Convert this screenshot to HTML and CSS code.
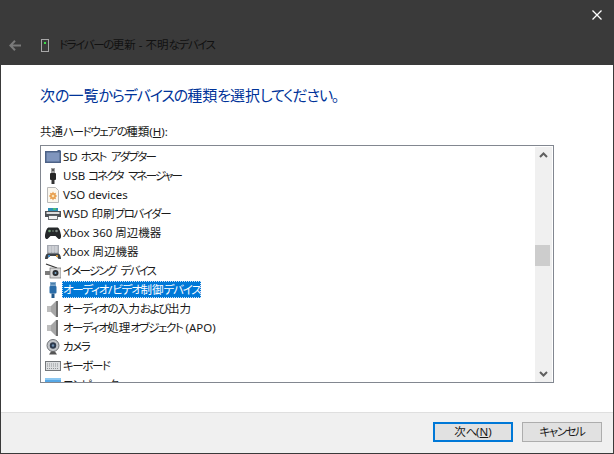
FILE: index.html
```html
<!DOCTYPE html>
<html lang="ja">
<head>
<meta charset="utf-8">
<title>ドライバーの更新</title>
<link rel="stylesheet" href="styles.css">
</head>
<body>
<div class="window">
  <header class="chrome">
    <div class="close-row">
      <svg class="close" width="10" height="10" viewBox="0 0 10 10"><path d="M0.500 0.500L9.500 9.500M9.500 0.500L0.500 9.500" stroke="#fff" stroke-width="1.300" fill="none"/></svg>
    </div>
    <div class="title-row">
      <svg class="back" width="12" height="11" viewBox="0 0 12 11"><path d="M6 .7L1.400 5.500L6 10.300M1.400 5.500H12" stroke="#7a7a7a" stroke-width="2" fill="none"/></svg>
      <svg class="device" width="8" height="13" viewBox="0 0 8 13"><rect x=".5" y=".5" width="7" height="12" fill="#3a3a3a" stroke="#a8a8a8"/><rect x="3" y="3" width="2" height="2" fill="#3ce04a"/></svg>
      <span class="title"><span class="k">ドライバーの</span>更新 - 不明<span class="k">なデバイス</span></span>
    </div>
  </header>
  <main class="content">
    <h1 class="heading">次<span class="k">の</span>一覧<span class="k">からデバイスの</span>種類<span class="k">を</span>選択<span class="k">してください。</span></h1>
    <label class="list-label">共通<span class="k">ハードウェアの</span>種類(<u>H</u>):</label>
    <div class="listbox">
      <ul class="items">
        <li class="item"><svg class="ico" viewBox="0 0 16 16"><path d="M0 2H12L13 1H15L16 2V14H0Z" fill="#4d6287"/><rect x="1.500" y="3.500" width="13" height="9" fill="#7f95bd"/></svg><span class="txt">SD <span class="k sp">ホスト アダプター</span></span></li>
        <li class="item"><svg class="ico" viewBox="0 0 16 16"><rect x="6" y="0" width="4" height="5" fill="#a0a0a0"/><rect x="7" y="1" width="2" height="2" fill="#555"/><rect x="5" y="5" width="6" height="7" rx="1" fill="#262626"/><rect x="6.500" y="12" width="3" height="4" fill="#333"/></svg><span class="txt">USB <span class="k sp">コネクタ マネージャー</span></span></li>
        <li class="item"><svg class="ico" viewBox="0 0 16 16"><path d="M2.500.5H10.500L13.500 3.500V15.500H2.500Z" fill="#fbf7ee" stroke="#b9b9b9"/><path d="M8 4.500L9 6.200L11 5.800L10.600 7.800L12.200 9L10.600 10.200L11 12.200L9 11.800L8 13.500L7 11.800L5 12.200L5.400 10.200L3.800 9L5.400 7.800L5 5.800L7 6.200Z" fill="#e8a050"/><circle cx="8" cy="9" r="1.300" fill="#fbe3b5"/></svg><span class="txt">VSO devices</span></li>
        <li class="item"><svg class="ico" viewBox="0 0 16 16"><rect x="3" y="2" width="10" height="3" fill="#2f8fb5"/><rect x="8" y="2" width="3" height="2" fill="#4dbb7a"/><rect x="0" y="5" width="16" height="6" fill="#4d5156"/><rect x="1.500" y="6" width="13" height="2" fill="#dcdcdc"/><rect x="3.500" y="9.500" width="9" height="4" fill="#f2f2f2" stroke="#4d5156" stroke-width=".8"/></svg><span class="txt">WSD 印刷<span class="k">プロバイダー</span></span></li>
        <li class="item"><svg class="ico" viewBox="0 0 16 16"><path d="M4 2.500H12C14 2.500 15 5 16 10C16.500 13.500 14.500 15 13 13.500L10.500 11H5.500L3 13.500C1.500 15-.5 13.500 0 10C1 5 2 2.500 4 2.500Z" fill="#25282a"/><circle cx="4.500" cy="6" r="1.300" fill="#6f9f76"/><circle cx="11.500" cy="6" r="1.300" fill="#7f8a84"/><rect x="7" y="5" width="2" height="2" fill="#4c5a50"/></svg><span class="txt">Xbox 360 周辺機器</span></li>
        <li class="item"><svg class="ico" viewBox="0 0 16 16"><rect x="2" y="1" width="12" height="9" fill="#a4a8b0"/><path d="M3 3H13M3 5H13M3 7H13M5 2V9M8 2V9M11 2V9" stroke="#e4e6ea" stroke-width=".8"/><path d="M0 15C0 11 2 9.500 3 9.500H13C14 9.500 16 11 16 15H13.500L11.500 12H4.500L2.500 15Z" fill="#3d4247"/><rect x="3" y="11" width="2" height="2" fill="#3f87c6"/><rect x="11" y="11" width="2" height="2" fill="#d59a3e"/></svg><span class="txt">Xbox 周辺機器</span></li>
        <li class="item"><svg class="ico" viewBox="0 0 16 16"><path d="M1 1L12 5" stroke="#333" stroke-width="1.300"/><rect x="5" y="5" width="11" height="10" fill="#d8d8d8" stroke="#6f6f6f" stroke-width=".7"/><circle cx="10.500" cy="10" r="3" fill="#2b2f33"/><circle cx="10.500" cy="10" r="1" fill="#7aa6c8"/><rect x="0" y="8" width="5" height="4" fill="#7b7b7b"/></svg><span class="txt"><span class="k sp">イメージング デバイス</span></span></li>
        <li class="item selected"><svg class="ico" viewBox="0 0 16 16"><rect x="5" y="0" width="6" height="4" fill="#7fa8cc"/><rect x="6" y="1" width="4" height="1.500" fill="#4b7fab"/><rect x="4.500" y="4" width="7" height="7.500" rx="1" fill="#2a6ca8"/><rect x="6.500" y="11.500" width="3" height="4.500" fill="#22588a"/></svg><span class="txt"><span class="k">オーディオ</span>/<span class="k">ビデオ</span>制御<span class="k">デバイス</span></span></li>
        <li class="item"><svg class="ico" viewBox="0 0 16 16"><path d="M2 5H6L11 0H13V16H11L6 11H2Z" fill="#a6a6a6"/><path d="M2 5H6V11H2Z" fill="#bdbdbd"/><path d="M11 0H13V16H11Z" fill="#6f6f6f"/></svg><span class="txt"><span class="k">オーディオの</span>入力<span class="k">および</span>出力</span></li>
        <li class="item"><svg class="ico" viewBox="0 0 16 16"><path d="M2 5H6L11 0H13V16H11L6 11H2Z" fill="#a6a6a6"/><path d="M2 5H6V11H2Z" fill="#bdbdbd"/><path d="M11 0H13V16H11Z" fill="#6f6f6f"/></svg><span class="txt"><span class="k">オーディオ</span>処理<span class="k">オブジェクト</span> (APO)</span></li>
        <li class="item"><svg class="ico" viewBox="0 0 16 16"><circle cx="8" cy="6.500" r="6" fill="#c2c5c9" stroke="#6f7276"/><circle cx="8" cy="6.500" r="3.200" fill="#2e3b4e"/><circle cx="8" cy="6.500" r="1.200" fill="#6f8fb0"/><path d="M4 15.500H12L10 12.500H6Z" fill="#555"/></svg><span class="txt"><span class="k">カメラ</span></span></li>
        <li class="item"><svg class="ico" viewBox="0 0 16 16"><rect x=".5" y="3.500" width="15" height="9" fill="#dcdee0" stroke="#74787c"/><path d="M2 6H14M2 8H14M2 10.500H14" stroke="#8f9396" stroke-dasharray="1 1"/></svg><span class="txt"><span class="k">キーボード</span></span></li>
        <li class="item"><svg class="ico" viewBox="0 0 16 16"><rect x="0" y="1" width="16" height="12" fill="#55a7e6"/><rect x="0" y="1" width="16" height="2" fill="#8cc8f2"/></svg><span class="txt"><span class="k">コンピューター</span></span></li>
      </ul>
      <div class="scrollbar">
        <svg class="arrow" width="9" height="6" viewBox="0 0 9 6"><path d="M1 5L4.500 1.500L8 5" stroke="#606060" stroke-width="2" fill="none"/></svg>
        <div class="track"><div class="thumb"></div></div>
        <svg class="arrow" width="9" height="6" viewBox="0 0 9 6"><path d="M1 1L4.500 4.500L8 1" stroke="#606060" stroke-width="2" fill="none"/></svg>
      </div>
    </div>
  </main>
  <footer class="footer">
    <button class="btn primary">次<span class="k">へ</span>(<u>N</u>)</button>
    <button class="btn"><span class="k">キャンセル</span></button>
  </footer>
</div>
</body>
</html>
```
FILE: styles.css
```css
* { box-sizing: border-box; }
html, body { margin: 0; padding: 0; }
body {
  width: 614px;
  height: 454px;
  overflow: hidden;
  font-family: "Noto Sans", "Noto Sans CJK JP", sans-serif;
  font-feature-settings: "palt";
  font-size: 11.5px;
  color: #1a1a1a;
}
.k { letter-spacing: -1.4px; }
.k.sp { letter-spacing: -1.8px; word-spacing: 4px; }
.window {
  width: 614px;
  height: 454px;
  display: flex;
  flex-direction: column;
  border: 1px solid #3a3a3a;
  border-width: 0 1px 1px;
  background: #fff;
}
.chrome {
  height: 65px;
  background: #3a3a3a;
  display: flex;
  flex-direction: column;
}
.close-row {
  display: flex;
  justify-content: flex-end;
  padding: 10px 11px 0 0;
  height: 37px;
}
.title-row {
  display: flex;
  align-items: center;
  height: 16px;
  padding-left: 8px;
}
.back { margin-right: 20px; }
.device { margin-right: 10px; }
.title { color: #111; font-size: 11.5px; line-height: 16px; }
.content {
  flex: 1;
  display: flex;
  flex-direction: column;
  padding: 19px 59px 0 39px;
}
.heading {
  margin: 0;
  font-size: 15px;
  font-weight: 400;
  line-height: 22px;
  color: #003399;
}
.heading .k { letter-spacing: -1.1px; }
.list-label {
  display: block;
  margin-top: 18px;
  line-height: 16px;
}
.listbox {
  margin-top: 5px;
  height: 238px;
  display: flex;
  border: 1px solid #828790;
  overflow: hidden;
}
.items {
  flex: 1;
  list-style: none;
  margin: 0;
  padding: 1px 0 0 4px;
}
.item {
  display: flex;
  align-items: center;
  height: 19px;
}
.ico { width: 16px; height: 16px; flex: none; margin-right: 1px; }
.txt { padding: 0 1px; line-height: 17px; height: 17px; }
.selected .txt {
  background: #0078d7;
  color: #fff;
  outline: 1px dotted #cfe4f7;
  outline-offset: -1px;
}
.selected .k { letter-spacing: -1.25px; }
.scrollbar {
  width: 17px;
  margin: 1px 1px 0 0;
  background: #f0f0f0;
  display: flex;
  flex-direction: column;
  align-items: center;
}
.arrow { flex: none; margin: 5px 0; }
.track { flex: 1; width: 100%; }
.thumb {
  width: 15px;
  margin-top: 82px;
  height: 21px;
  background: #cdcdcd;
}
.footer {
  height: 41px;
  background: #f0f0f0;
  border-top: 1px solid #dfdfdf;
  display: flex;
  justify-content: flex-end;
  gap: 9px;
  padding: 9px 11px 0 0;
}
.btn {
  width: 80px;
  height: 20px;
  padding: 0;
  background: #e1e1e1;
  border: 1px solid #adadad;
  font: inherit;
  font-feature-settings: inherit;
  color: #1a1a1a;
  line-height: 16px;
}
.primary { border: 2px solid #0078d7; }
```
